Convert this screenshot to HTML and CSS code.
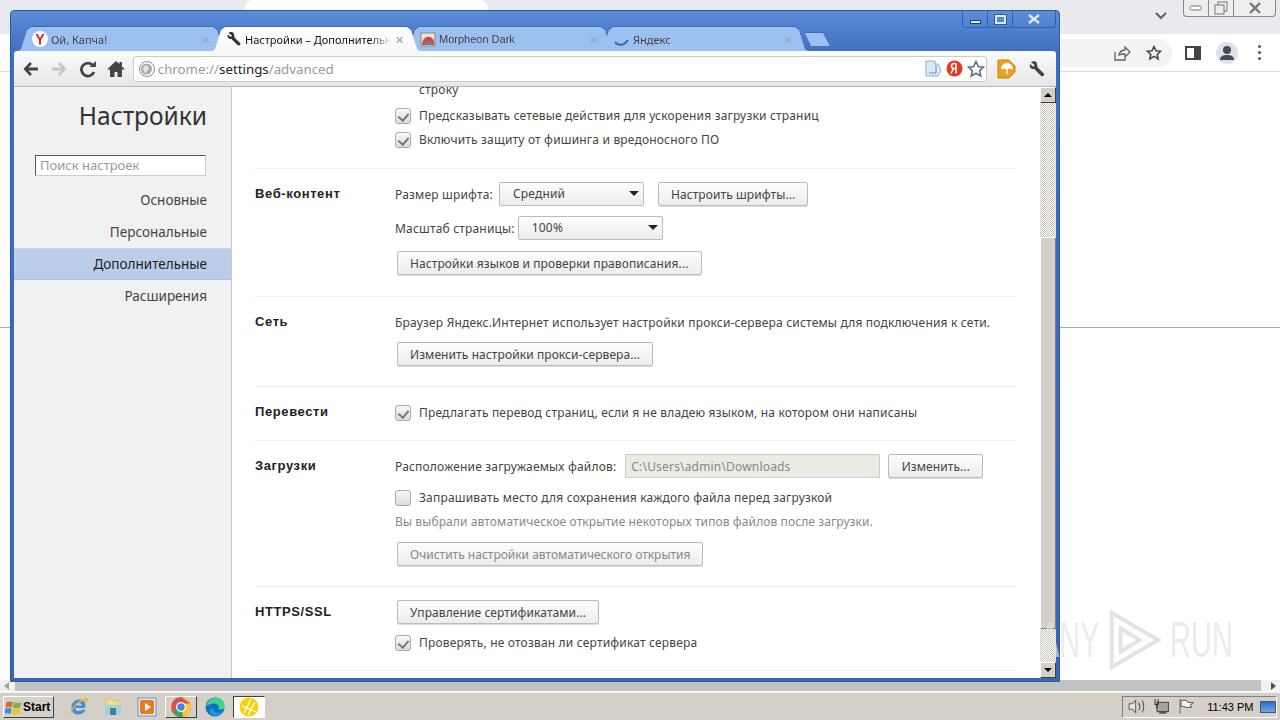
FILE: index.html
```html
<!DOCTYPE html>
<html lang="en">
<head>
    <meta charset="UTF-8">
    <title>Настройки</title>
    <link rel="stylesheet" href="styles.css">
</head>
<body>
    <div class="desktop">
        <div class="back-top">
            <div class="back-tab"></div>
            <svg class="back-chevron" width="14" height="10" viewBox="0 0 14 10"><path d="M2 2l5 5 5-5" fill="none" stroke="#5f6368" stroke-width="2"/></svg>
            <div class="back-controls">
                <span class="back-ctl"><svg width="14" height="8" viewBox="0 0 14 8"><rect x="1" y="2" width="11" height="4" rx="1.5" fill="#fff" stroke="#777"/></svg></span>
                <span class="back-ctl"><svg width="16" height="14" viewBox="0 0 16 14"><rect x="5" y="1" width="9" height="9" fill="none" stroke="#777"/><rect x="2" y="4" width="9" height="9" fill="#eee" stroke="#777"/></svg></span>
                <span class="back-ctl back-ctl-wide"><svg width="14" height="12" viewBox="0 0 14 12"><path d="M2 1l10 10M12 1L2 11" stroke="#777" stroke-width="2.4"/></svg></span>
            </div>
        </div>
        <div class="back-toolbar">
            <div class="back-omni">
                <svg width="18" height="18" viewBox="0 0 18 18"><path d="M2 8v8h10v-3M6 11c1-4 4-5 6-5V3l5 5-5 5v-3c-2 0-4 0-6 1z" fill="none" stroke="#5f6368" stroke-width="1.3"/></svg>
                <svg width="16" height="16" viewBox="0 0 16 16"><path d="M8 1.5l2 4.3 4.6.5-3.4 3.1 1 4.6L8 11.3l-4.200 2.700 1-4.600L1.400 6.300 6 5.800z" fill="none" stroke="#444" stroke-width="1.500"/></svg>
            </div>
            <svg class="back-icon" width="16" height="14" viewBox="0 0 16 14"><rect x="1" y="1" width="14" height="12" fill="none" stroke="#444" stroke-width="2"/><rect x="9" y="1" width="6" height="12" fill="#444"/></svg>
            <span class="back-avatar"><svg width="18" height="16" viewBox="0 0 18 16"><circle cx="9" cy="5" r="4" fill="#444c5c"/><path d="M2 15c0-4 3-5 7-5s7 1 7 5z" fill="#444c5c"/></svg></span>
            <span class="back-dots"><i></i><i></i><i></i></span>
        </div>
        <div class="back-page"></div>
        <div class="back-fill"></div>
        <div class="back-hscroll">
            <span class="arrow-left"></span>
            <div class="back-hthumb"></div>
            <span class="arrow-right"></span>
        </div>
    </div>

    <div class="taskbar">
        <button class="start-btn">
            <svg width="18" height="16" viewBox="0 0 16 15"><path d="M1 3c2-1 4-1 6 0l-1 5c-2-1-4-1-6 0z" fill="#e8622a"/><path d="M8 3c2 1 4 1 7 0l-1 5c-3 1-5 1-7 0z" fill="#7cb642"/><path d="M0 9c2-1 4-1 5.500 0L5 14c-2-1-4-1-6 0z" fill="#3f8fdc"/><path d="M7 9c2 1 4 1 7 0l-1 5c-3 1-5 1-7 0z" fill="#f2c230"/></svg>
            Start
        </button>
        <div class="quick-icons">
            <span class="task-slot"><svg width="20" height="20" viewBox="0 0 20 20"><path d="M15 11H6c.3 3 4.500 4 7.500 1.500h3C15 17 9 19 5 16.500 1 13 2 6 6 3.500 10 1 16 3 16.500 8c.2 1 0 2-1.500 3zM6 8.500h7c-.5-3.500-6-3.500-7 0z" fill="#3f8fd8"/><path d="M2 16C3 10 11 3 18 1.500c1.500 1-1 3-2 4" fill="none" stroke="#e8b030" stroke-width="1.300"/></svg></span>
            <span class="task-slot"><svg width="20" height="18" viewBox="0 0 20 18"><path d="M3 1h6l2 2h6v5H3z" fill="#f0dc8c" stroke="#c8b060" stroke-width=".6"/><rect x="2" y="7" width="16" height="10" fill="#a6d0e0"/><rect x="7" y="10" width="6" height="7" fill="#3f7f9f"/></svg></span>
            <span class="task-slot"><svg width="20" height="20" viewBox="0 0 20 20"><rect x="1" y="1" width="18" height="18" fill="#dfe9f5" stroke="#6a94c4"/><rect x="3" y="3" width="14" height="14" rx="2" fill="#e87c1e"/><path d="M8 6l6 4-6 4z" fill="#fff"/></svg></span>
            <span class="task-slot task-raised"><svg width="22" height="22" viewBox="0 0 22 22"><circle cx="11" cy="11" r="10" fill="#dd5044"/><path d="M11 11L2.500 16A10 10 0 0 0 13 20.800z" fill="#3aa757"/><path d="M11 1a10 10 0 0 1 9.400 6.600H11l2 13.200A10 10 0 0 0 21 11 10 10 0 0 0 20.400 7.600z" fill="#fcc934"/><circle cx="11" cy="11" r="5" fill="#fff"/><circle cx="11" cy="11" r="3.800" fill="#4285f4"/></svg></span>
            <span class="task-slot"><svg width="20" height="20" viewBox="0 0 20 20"><circle cx="10" cy="10" r="9.500" fill="#0c70c8"/><path d="M1 9C2 3 8-.5 14 1c4 1.500 6 5 5.500 9.500-.5 2-4 3-6 1.500 1-4-2-6-5-5.500C5 7 2.500 8.500 1 9z" fill="#3fcf8e"/><path d="M8 11c0 4 4 6 9 4-2 4-8 5-11 2-2-2-2-5 2-6z" fill="#1a9ae0"/></svg></span>
            <span class="task-slot task-sunken"><svg width="22" height="22" viewBox="0 0 22 22"><circle cx="11" cy="11" r="9.500" fill="#f5d20a"/><path d="M6 17L13 3M10 19L17 6M4 10l14 6" stroke="#fff" stroke-width="1.300" fill="none"/></svg></span>
        </div>
        <div class="tray">
            <svg width="18" height="17" viewBox="0 0 16 15"><path d="M1 5h3l3-3v11l-3-3H1z" fill="#e8e6de" stroke="#666"/><path d="M10 4c1 2 1 5 0 7M13 2c2 3 2 8 0 11" fill="none" stroke="#555"/></svg>
            <svg width="17" height="17" viewBox="0 0 16 16"><rect x="4" y="4" width="11" height="9" fill="#a8a498" stroke="#444"/><path d="M2 1v5h3V1M3.500 6v4" fill="none" stroke="#333"/><rect x="6" y="13" width="7" height="2" fill="#555"/></svg>
            <svg width="17" height="17" viewBox="0 0 16 16"><path d="M2 1v14" stroke="#666"/><path d="M3 2h5l2 2h5l-3 3 1 2H8L6 8H3z" fill="#f3f1ea" stroke="#666"/></svg>
            <span class="clock">11:43 PM</span>
            <span class="tray-screen"></span>
        </div>
    </div>

    <div class="browser">
        <div class="titlebar">
            <div class="tabs">
                <div class="tab">
                    <svg width="16" height="16" viewBox="0 0 16 16"><circle cx="8" cy="8" r="8" fill="#fff"/><path d="M3.500 3h2.300L8 7l2.200-4h2.300L9 9v4.500H7V9z" fill="#e02b20"/></svg>
                    <span class="tab-title">Ой, Капча!</span><span class="tab-x">✕</span>
                </div>
                <div class="tab tab-active">
                    <svg width="16" height="16" viewBox="0 0 16 16"><path d="M6 1c-2 0-3 .5-3.500 1L6 4.500 4.500 6 2 3.500C1 5 1.500 8 5 8h.5l6 6c1 1 3 .5 3-1.500l-6-6C8.500 3.500 7.500 1 6 1z" fill="#333"/></svg>
                    <span class="tab-title tab-fade">Настройки – Дополнительные</span><span class="tab-x">✕</span>
                </div>
                <div class="tab">
                    <svg width="16" height="16" viewBox="0 0 16 16"><rect x="1" y="2" width="14" height="13" fill="#e8e4e0" stroke="#888"/><path d="M2 14c0-6 4-9 8-8 2 .5 3 2 4 4v4z" fill="#d8483c"/><path d="M6 14c0-3 2-5 4-4l2 4z" fill="#4c88c8"/></svg>
                    <span class="tab-title tab-latin">Morpheon Dark</span><span class="tab-x">✕</span>
                </div>
                <div class="tab">
                    <svg width="16" height="16" viewBox="0 0 16 16"><path d="M1 11c3 4 9 4 13-2" fill="none" stroke="#2a6cb0" stroke-width="2"/></svg>
                    <span class="tab-title">Яндекс</span><span class="tab-x">✕</span>
                </div>
                <div class="tab-new"></div>
            </div>
            <div class="win-controls">
                <span class="win-btn"><i class="win-min"></i></span>
                <span class="win-btn"><i class="win-max"></i></span>
                <span class="win-btn win-close">
                    <svg width="14" height="10" viewBox="0 0 14 10"><path d="M2 1l10 8M12 1L2 9" stroke="#dce8f8" stroke-width="2.400"/></svg>
                </span>
            </div>
        </div>

        <div class="toolbar">
            <svg class="nav-icon" width="18" height="16" viewBox="0 0 18 16"><path d="M8 1L1.500 8 8 15l2-2-3.500-3.500H16v-3H6.500L10 3z" fill="#444"/></svg>
            <svg class="nav-icon" width="18" height="16" viewBox="0 0 18 16"><path d="M10 1l6.500 7L10 15l-2-2 3.500-3.500H2v-3h9.500L8 3z" fill="#c4c8cc"/></svg>
            <svg class="nav-icon nav-reload" width="18" height="18" viewBox="0 0 18 18"><path d="M14 5.500A6.500 6.500 0 1 0 15 12" fill="none" stroke="#444" stroke-width="2.800"/><path d="M10.500 7H17V1z" fill="#444"/></svg>
            <svg class="nav-icon" width="18" height="18" viewBox="0 0 18 18"><path d="M9 1L0 9.500h3V17h4.500v-5h3v5H15V9.500h3L15 6.500V2h-2.500v2z" fill="#444"/></svg>
            <div class="omnibox">
                <svg width="16" height="16" viewBox="0 0 16 16"><circle cx="8" cy="8" r="7.500" fill="#fff" stroke="#8a8a8a"/><circle cx="7.500" cy="8" r="5.500" fill="#a8a8a8"/><path d="M5 5c2-1 5 0 5 2s-2 2-2 4l-2 1c-1-2-3-5-1-7z" fill="#e4e4e4"/></svg>
                <span class="url"><span class="url-dim">chrome://</span>settings<span class="url-dim">/advanced</span></span>
                <div class="omni-actions">
                    <svg width="18" height="18" viewBox="0 0 18 18"><path d="M2 1h9v3h3l3 6-3 6H2z" fill="#dbe8f4" stroke="#8eaed0"/><path d="M5 13h7V5" fill="none" stroke="#6a8cb0"/></svg>
                    <svg width="17" height="17" viewBox="0 0 17 17"><circle cx="8.500" cy="8.500" r="8" fill="#e23b24"/><path d="M10 3.500H8C6 3.500 5.500 5 5.500 6S6 8.500 8 8.500h2M10 3.500v10M7.500 8.500l-2.500 5" fill="none" stroke="#fff" stroke-width="1.500"/></svg>
                    <svg width="18" height="18" viewBox="0 0 18 18"><path d="M9 1.500l2.300 5 5.200.6-3.900 3.500 1.100 5.300L9 13.200l-4.700 2.700 1.100-5.300L1.500 7.100l5.200-.6z" fill="#fff" stroke="#5e6e80" stroke-width="1.600"/></svg>
                </div>
            </div>
            <svg class="ext-icon" width="20" height="20" viewBox="0 0 20 20"><path d="M1 1h11l6 6v6l-6 6H1z" fill="#f0a020" stroke="#d07a10"/><path d="M4 10a6 6 0 0 1 12 0z" fill="#fff"/><path d="M10 10v5" stroke="#fff" stroke-width="1.500"/></svg>
            <svg class="wrench-icon" width="18" height="18" viewBox="0 0 16 16"><path d="M6 1c-2 0-3 .5-3.500 1L6 4.500 4.500 6 2 3.500C1 5 1.500 8 5 8h.5l6 6c1 1 3 .5 3-1.500l-6-6C8.500 3.500 7.500 1 6 1z" fill="#444"/></svg>
        </div>

        <div class="frame">
            <div class="sidebar">
                <h1>Настройки</h1>
                <div class="search-box">Поиск настроек</div>
                <ul class="side-nav">
                    <li>Основные</li>
                    <li>Персональные</li>
                    <li class="selected">Дополнительные</li>
                    <li>Расширения</li>
                </ul>
            </div>

            <div class="content">
                <div class="section section-first">
                    <div class="section-title"></div>
                    <div class="section-body">
                        <div class="wrapped-line">строку</div>
                        <div class="check-row"><span class="check checked"></span>Предсказывать сетевые действия для ускорения загрузки страниц</div>
                        <div class="check-row"><span class="check checked"></span>Включить защиту от фишинга и вредоносного ПО</div>
                    </div>
                </div>

                <div class="section section-web">
                    <div class="section-title">Веб-контент</div>
                    <div class="section-body">
                        <div class="field-row">
                            <span>Размер шрифта:</span>
                            <span class="select select-font">Средний</span>
                            <button class="btn btn-fonts">Настроить шрифты...</button>
                        </div>
                        <div class="field-row field-zoom">
                            <span>Масштаб страницы:</span>
                            <span class="select select-zoom">100%</span>
                        </div>
                        <button class="btn btn-lang">Настройки языков и проверки правописания...</button>
                    </div>
                </div>

                <div class="section section-net">
                    <div class="section-title">Сеть</div>
                    <div class="section-body">
                        <div class="plain-line">Браузер Яндекс.Интернет использует настройки прокси-сервера системы для подключения к сети.</div>
                        <button class="btn">Изменить настройки прокси-сервера...</button>
                    </div>
                </div>

                <div class="section section-translate">
                    <div class="section-title">Перевести</div>
                    <div class="section-body">
                        <div class="check-row"><span class="check checked"></span>Предлагать перевод страниц, если я не владею языком, на котором они написаны</div>
                    </div>
                </div>

                <div class="section section-downloads">
                    <div class="section-title">Загрузки</div>
                    <div class="section-body">
                        <div class="field-row">
                            <span>Расположение загружаемых файлов:</span>
                            <span class="path-box">C:\Users\admin\Downloads</span>
                            <button class="btn btn-change">Изменить...</button>
                        </div>
                        <div class="check-row check-ask"><span class="check"></span>Запрашивать место для сохранения каждого файла перед загрузкой</div>
                        <div class="hint">Вы выбрали автоматическое открытие некоторых типов файлов после загрузки.</div>
                        <button class="btn btn-disabled">Очистить настройки автоматического открытия</button>
                    </div>
                </div>

                <div class="section section-https">
                    <div class="section-title">HTTPS/SSL</div>
                    <div class="section-body">
                        <button class="btn">Управление сертификатами...</button>
                        <div class="check-row check-cert"><span class="check checked"></span>Проверять, не отозван ли сертификат сервера</div>
                    </div>
                </div>
            </div>

            <div class="vscroll">
                <span class="sb-btn"><i class="tri-up"></i></span>
                <div class="sb-track sb-track-top"></div>
                <div class="sb-thumb"></div>
                <div class="sb-track sb-track-bottom"></div>
                <span class="sb-btn"><i class="tri-down"></i></span>
            </div>
        </div>
    </div>

    <div class="watermark">
        <span class="wm-word">ANY</span>
        <svg width="62" height="62" viewBox="0 0 64 64"><path d="M8 4v56l48-28zM17 20v24l20-12z" fill="none" stroke="#d8d8d8" stroke-width="4"/></svg>
        <span class="wm-word">RUN</span>
    </div>
</body>
</html>
```

FILE: styles.css
```css
* {
    box-sizing: border-box;
}
html, body {
    margin: 0;
    height: 720px;
    overflow: hidden;
}
body {
    font-family: "Noto Sans", sans-serif;
    font-size: 12px;
    color: #333;
    background-color: #fff;
    display: flex;
    flex-direction: column;
    position: relative;
}

/* chrome window behind */
.desktop {
    height: 692px;
    display: flex;
    flex-direction: column;
}
.back-top {
    height: 34px;
    background-color: #e8eaed;
    display: flex;
    justify-content: flex-end;
    padding-right: 4px;
}
.back-tab {
    width: 243px;
    height: 34px;
    margin: 0 auto 0 245px;
    background-color: #fff;
    border-radius: 8px 8px 0 0;
}
.back-chevron {
    margin: 11px 15px 0 0;
}
.back-controls {
    display: flex;
    height: 17px;
    border: 1px solid #888;
    border-top: none;
    border-radius: 0 0 4px 4px;
    background-color: #eee;
}
.back-ctl {
    width: 25px;
    display: flex;
    align-items: center;
    justify-content: center;
    border-right: 1px solid #888;
}
.back-ctl-wide {
    width: 41px;
    border-right: none;
}
.back-toolbar {
    height: 38px;
    display: flex;
    align-items: center;
    background-color: #fff;
    border-bottom: 1px solid #dadce0;
}
.back-omni {
    margin-left: 1060px;
    width: 112px;
    height: 28px;
    background-color: #f1f3f4;
    border-radius: 0 14px 14px 0;
    display: flex;
    align-items: center;
    justify-content: flex-end;
    gap: 15px;
    padding-right: 10px;
}
.back-icon {
    margin-left: 13px;
}
.back-avatar {
    width: 22px;
    height: 22px;
    margin-left: 15px;
    border-radius: 50%;
    background-color: #dfe1e8;
    display: flex;
    align-items: center;
    justify-content: center;
}
.back-dots {
    margin-left: 20px;
    display: flex;
    flex-direction: column;
    gap: 3px;
}
.back-dots i {
    width: 3px;
    height: 3px;
    background-color: #555;
    border-radius: 50%;
}
.back-page {
    height: 256px;
    border-bottom: 1px solid #aaa;
}
.back-fill {
    flex: 1;
}
.back-hscroll {
    height: 11px;
    margin-bottom: 1px;
    background-color: #f1f1f1;
    display: flex;
    align-items: center;
}
.back-hthumb {
    flex: 1;
    height: 11px;
    margin: 0 10px 0 6px;
    background-color: #c2c2c2;
}
.arrow-left {
    margin-left: 4px;
    border: 4px solid transparent;
    border-right: 5px solid #a0a0a0;
    border-left: none;
}
.arrow-right {
    margin-right: 4px;
    border: 4px solid transparent;
    border-left: 5px solid #505050;
    border-right: none;
}

/* taskbar */
.taskbar {
    height: 28px;
    background-color: #d4d0c8;
    border-top: 1px solid #f4f2ec;
    display: flex;
    align-items: center;
    padding: 0 3px;
}
.start-btn {
    width: 51px;
    height: 22px;
    padding: 0 1px;
    display: flex;
    align-items: center;
    gap: 0;
    font-family: "Liberation Sans", sans-serif;
    font-size: 12px;
    font-weight: bold;
    color: #000;
    background-color: #d4d0c8;
    border: 1px solid;
    border-color: #fff #404040 #404040 #fff;
}
.quick-icons {
    display: flex;
    align-items: center;
    margin-left: 9px;
    flex: 1;
}
.task-slot {
    width: 32px;
    height: 22px;
    margin-right: 2px;
    display: flex;
    align-items: center;
    justify-content: center;
}
.task-raised {
    border: 1px solid;
    border-color: #fff #404040 #404040 #fff;
}
.task-sunken {
    background-color: #fff;
    border: 1px solid;
    border-color: #404040 #fff #fff #404040;
}
.tray {
    width: 155px;
    height: 22px;
    border: 1px solid;
    border-color: #808080 #fff #fff #808080;
    display: flex;
    align-items: center;
    gap: 8px;
    padding-left: 5px;
}
.clock {
    margin-left: 5px;
    font-family: "Liberation Sans", sans-serif;
    font-size: 11px;
    color: #000;
    white-space: nowrap;
}
.tray-screen {
    width: 16px;
    height: 12px;
    margin-left: -1px;
    background: linear-gradient(#2f6cc4, #70a8e0);
    border: 1px solid #3a5a90;
}

/* yandex browser window */
.browser {
    position: absolute;
    left: 10px;
    top: 10px;
    width: 1050px;
    height: 672px;
    display: flex;
    flex-direction: column;
    border: 1px solid #2f5a9c;
    border-radius: 4px 4px 0 0;
    padding: 0 3px 3px 3px;
    background: linear-gradient(#5b8dd9 0, #3f6fc0 42px, #3d66ae 100%);
}
.titlebar {
    height: 40px;
    margin: 0 -3px;
    position: relative;
}
.win-controls {
    position: absolute;
    right: 3px;
    top: 0;
    display: flex;
    height: 17px;
    border: 1px solid #35609f;
    border-top: none;
    border-radius: 0 0 3px 3px;
}
.win-btn {
    width: 25px;
    display: flex;
    align-items: center;
    justify-content: center;
    border-right: 1px solid #35609f;
}
.win-close {
    width: 42px;
    border-right: none;
}
.win-min {
    width: 11px;
    height: 4px;
    margin-top: 5px;
    background-color: #dce8f8;
    border: 1px solid #20406f;
}
.win-max {
    width: 11px;
    height: 9px;
    border: 2px solid #dce8f8;
    outline: 1px solid #2f5a9c;
}
.tabs {
    position: absolute;
    left: 7px;
    bottom: 0;
    height: 24px;
    display: flex;
    filter: drop-shadow(0 -1px 0 #3b69b2);
}
.tab {
    width: 208px;
    height: 24px;
    margin-right: -14px;
    padding: 0 14px 0 14px;
    display: flex;
    align-items: center;
    gap: 3px;
    font-size: 11px;
    color: #444;
    background-color: #9cc0f0;
    clip-path: polygon(0 100%, 3px 92%, 9px 12%, 13px 0, 195px 0, 199px 12%, 205px 92%, 208px 100%);
}
.tab-active {
    position: relative;
    z-index: 1;
    color: #111;
    background: linear-gradient(#fff, #f8f8f8);
}
.tab-title {
    flex: 1;
    white-space: nowrap;
    overflow: hidden;
}
.tab-latin {
    font-family: "Liberation Sans", sans-serif;
    font-size: 11px;
}
.tab-fade {
    mask-image: linear-gradient(to right, #000 85%, transparent);
}
.tab-x {
    font-size: 11px;
    color: #8fa4c0;
    margin-right: 2px;
}
.tab-active .tab-x {
    color: #999;
}
.tab-new {
    width: 26px;
    height: 13px;
    margin-left: 11px;
    margin-top: 6px;
    background-color: #9cc0f0;
    clip-path: polygon(0 0, 18px 0, 25px 100%, 6px 100%);
}
.toolbar {
    height: 36px;
    display: flex;
    align-items: center;
    padding: 0 10px 0 8px;
    background: linear-gradient(#fbfbfb, #e6e6e6);
    border-bottom: 1px solid #b8b8b8;
    border-radius: 3px 3px 0 0;
}
.nav-icon {
    margin-right: 10px;
}
.nav-reload {
    margin-left: 1px;
}
.omnibox {
    width: 857px;
    height: 26px;
    margin-left: -2px;
    padding: 0 1px 0 5px;
    display: flex;
    align-items: center;
    gap: 3px;
    background-color: #fff;
    border: 1px solid #ccc;
    border-radius: 3px;
}
.url {
    flex: 1;
    font-size: 13.300px;
    color: #222;
}
.url-dim {
    color: #999;
}
.omni-actions {
    display: flex;
    align-items: center;
    gap: 4px;
}
.ext-icon {
    margin-left: 10px;
}
.wrench-icon {
    margin-left: 11px;
}

.frame {
    flex: 1;
    display: flex;
    min-height: 0;
    background-color: #fff;
}
.sidebar {
    width: 218px;
    background-color: #f1f1f1;
    border-right: 1px solid #c8c8c8;
    text-align: right;
}
.sidebar h1 {
    margin: 13px 24px 0 0;
    font-size: 24.500px;
    font-weight: normal;
    line-height: 32px;
    color: #333;
}
.search-box {
    width: 171px;
    height: 21px;
    margin: 23px 0 0 21px;
    padding-left: 4px;
    line-height: 19px;
    text-align: left;
    color: #999;
    font-size: 13px;
    background-color: #fff;
    border: 1px solid;
    border-color: #555 #ccc #ccc #555;
}
.side-nav {
    list-style: none;
    margin: 8px 0 0 0;
    padding: 0;
}
.side-nav li {
    height: 32px;
    padding-right: 24px;
    line-height: 33px;
    font-size: 13.500px;
    color: #444;
}
.side-nav .selected {
    line-height: 30px;
    background-color: #bbcee9;
    color: #222;
    border-top: 1px solid #cbdaf0;
    border-bottom: 1px solid #a8bfe0;
}

.content {
    flex: 1;
    min-width: 0;
    padding: 0 25px 0 23px;
    overflow: hidden;
    letter-spacing: 0.18px;
    color: #444;
    background-color: #fff;
}
.section {
    display: flex;
    border-bottom: 1px solid #eee;
}
.section-title {
    width: 140px;
    flex-shrink: 0;
    padding-top: 4px;
    font-family: "Liberation Sans", sans-serif;
    font-weight: bold;
    font-size: 13px;
    letter-spacing: 0.6px;
    color: #222;
}
.section-body {
    flex: 1;
    min-width: 0;
}
.section-first {
    margin-top: -6px;
    padding-bottom: 16px;
}
.section-first .check-row + .check-row {
    margin-top: -1px;
}
.section-web {
    padding: 13px 0 21px;
}
.section-net {
    padding: 17px 0 20px;
}
.section-net .section-title {
    padding-top: 0;
}
.section-translate {
    padding: 13px 0 15px;
}
.section-downloads {
    padding: 13px 0 20px;
}
.section-https {
    padding: 13px 0 15px;
}
.wrapped-line {
    margin: 0 0 4px 24px;
    line-height: 18px;
}
.check-row {
    height: 25px;
    display: flex;
    align-items: center;
    gap: 8px;
    white-space: nowrap;
}
.check {
    width: 16px;
    height: 16px;
    border: 1px solid #aaa;
    border-radius: 3px;
    background: linear-gradient(#f8f8f8, #dcdcdc);
    position: relative;
}
.checked::after {
    content: "";
    position: absolute;
    left: 4px;
    top: 2px;
    width: 5px;
    height: 8px;
    border: solid #777;
    border-width: 0 2px 2px 0;
    transform: rotate(40deg);
}
.field-row {
    height: 24px;
    display: flex;
    align-items: center;
    white-space: nowrap;
}
.field-zoom {
    margin-top: 10px;
    margin-bottom: 11px;
}
.select {
    height: 24px;
    margin-left: 6px;
    padding-left: 13px;
    line-height: 22px;
    border: 1px solid #bbb;
    border-radius: 2px;
    background: linear-gradient(#fdfdfd, #ececec);
    position: relative;
}
.select::after {
    content: "";
    position: absolute;
    right: 4px;
    top: 8px;
    border: 5px solid transparent;
    border-top: 5px solid #222;
    border-bottom: none;
}
.select-font {
    width: 145px;
}
.select-zoom {
    width: 145px;
    margin-left: 3px;
}
.btn {
    height: 24px;
    padding: 0 12px;
    font-family: inherit;
    font-size: 12px;
    letter-spacing: 0.09px;
    color: #444;
    border: 1px solid #bbb;
    border-radius: 2px;
    background: linear-gradient(#fdfdfd, #ececec);
    box-shadow: 0 1px 0 #ddd;
    white-space: nowrap;
    display: block;
}
.btn-fonts {
    margin-left: 14px;
}
.btn-lang,
.section-net .btn,
.btn-disabled,
.section-https .btn {
    margin-left: 2px;
}
.btn-change {
    width: 95px;
    margin-left: 8px;
}
.btn-disabled {
    color: #888;
    margin-top: 11px;
    letter-spacing: 0;
}
.plain-line {
    margin-bottom: 10px;
    line-height: 18px;
    white-space: nowrap;
}
.path-box {
    width: 255px;
    height: 24px;
    margin-left: 9px;
    padding-left: 5px;
    line-height: 23px;
    color: #888;
    background-color: #ebebe4;
    border: 1px solid #ccc;
}
.check-ask {
    margin-top: 7px;
}
.hint {
    margin-top: 3px;
    line-height: 18px;
    letter-spacing: 0.1px;
    color: #888;
}
.check-cert {
    margin-top: 6px;
}

.vscroll {
    width: 16px;
    display: flex;
    flex-direction: column;
}
.sb-btn {
    height: 16px;
    background-color: #d4d0c8;
    border: 1px solid;
    border-color: #fff #404040 #404040 #fff;
    display: flex;
    align-items: center;
    justify-content: center;
}
.tri-up {
    border: 4px solid transparent;
    border-bottom: 4px solid #000;
    border-top: none;
}
.tri-down {
    border: 4px solid transparent;
    border-top: 4px solid #000;
    border-bottom: none;
}
.sb-track {
    background-color: #fff;
    background-image: repeating-conic-gradient(#c8c4bc 0 25%, #fff 0 50%);
    background-size: 2px 2px;
}
.sb-track-top {
    height: 134px;
}
.sb-track-bottom {
    height: 33px;
}
.sb-thumb {
    flex: 1;
    background-color: #d4d0c8;
    border: 1px solid;
    border-color: #fff #808080 #808080 #fff;
}

.watermark {
    position: absolute;
    left: 1040px;
    top: 609px;
    display: flex;
    align-items: center;
    gap: 4px;
    font-family: "Liberation Sans", sans-serif;
    font-size: 50px;
    color: #e4e4e4;
    opacity: 0.7;
    pointer-events: none;
}
.wm-word {
    width: 60px;
    transform: scaleX(0.58);
    transform-origin: left center;
}
```
